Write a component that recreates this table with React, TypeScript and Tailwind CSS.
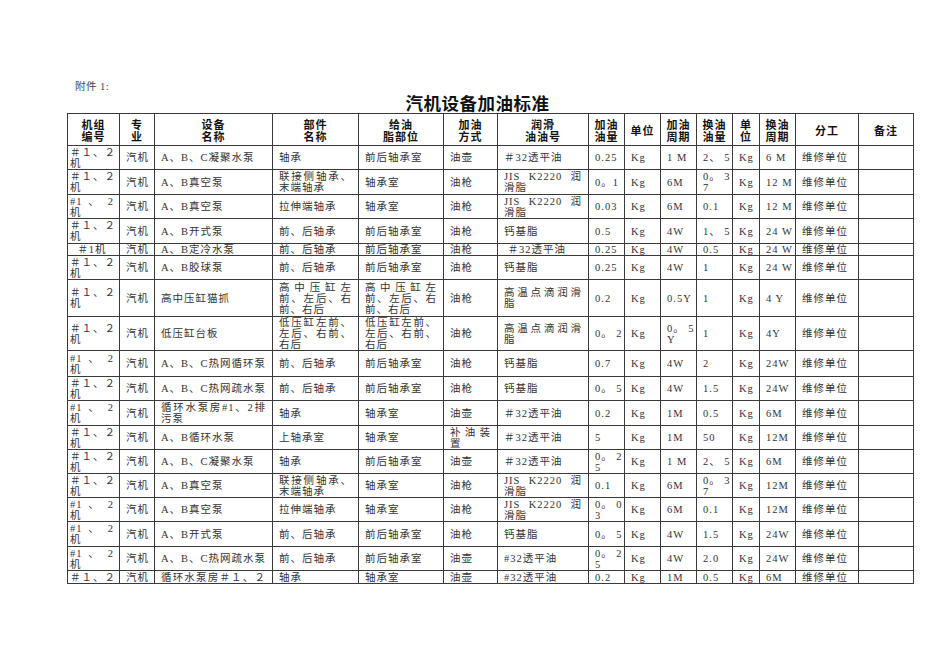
const font = "font-['Liberation_Serif','Noto_Sans_CJK_SC',serif]";
const cols =
  "grid grid-cols-[52px_35px_118px_86px_85px_54px_91px_36px_36px_36px_36px_27px_36px_63px_55px]";
const J = "[text-align-last:justify]";

const headers = [
  "机组\n编号",
  "专\n业",
  "设备\n名称",
  "部件\n名称",
  "给油\n脂部位",
  "加油\n方式",
  "润滑\n油油号",
  "加油\n油量",
  "单位",
  "加油\n周期",
  "换油\n油量",
  "单\n位",
  "换油\n周期",
  "分工",
  "备注",
];

type C = string | [string, string];

// heights match the ruled lines of the sheet
const rows: { h: string; cells: C[] }[] = [
  { h: "h-[24px]", cells: ["＃１、２\n机", "汽机", "A、B、C凝聚水泵", "轴承", "前后轴承室", "油壶", "＃32透平油", "0.25", "Kg", "1 M", "2、 5", "Kg", "6 M", "维修单位", ""] },
  { h: "h-[25px]", cells: ["＃１、２\n机", "汽机", "A、B真空泵", "联接侧轴承、\n末端轴承", "轴承室", "油枪", "JIS  K2220  润\n滑脂", "0。1", "Kg", "6M", "0。 3\n7", "Kg", "12 M", "维修单位", ""] },
  { h: "h-[24px]", cells: ["#1 、 2\n机", "汽机", "A、B真空泵", "拉伸端轴承", "轴承室", "油枪", "JIS  K2220  润\n滑脂", "0.03", "Kg", "6M", "0.1", "Kg", "12 M", "维修单位", ""] },
  { h: "h-[25px]", cells: ["＃１、２\n机", "汽机", "A、B开式泵", "前、后轴承", "前后轴承室", "油枪", "钙基脂", "0.5", "Kg", "4W", "1、 5", "Kg", "24 W", "维修单位", ""] },
  { h: "h-[12px]", cells: [["＃1机", "text-center"], "汽机", "A、B定冷水泵", "前、后轴承", "前后轴承室", "油枪", " ＃32透平油", "0.25", "Kg", "4W", "0.5", "Kg", "24 W", "维修单位", ""] },
  { h: "h-[24px]", cells: ["＃１、２\n机", "汽机", "A、B胶球泵", "前、后轴承", "前后轴承室", "油枪", "钙基脂", "0.25", "Kg", "4W", "1", "Kg", "24 W", "维修单位", ""] },
  { h: "h-[37px]", cells: ["＃１、２\n机", "汽机", "高中压缸猫抓", "高中压缸左\n前、左后、右\n前、右后", "高中压缸左\n前、左后、右\n前、右后", "油枪", "高温点滴润滑\n脂", "0.2", "Kg", "0.5Y", "1", "Kg", "4 Y", "维修单位", ""] },
  { h: "h-[34px]", cells: ["＃１、２\n机", "汽机", "低压缸台板", "低压缸左前、\n左后、右前、\n右后", "低压缸左前、\n左后、右前、\n右后", "油枪", "高温点滴润滑\n脂", "0。 2", "Kg", "0。 5\nY", "1", "Kg", "4Y", "维修单位", ""] },
  { h: "h-[26px]", cells: ["#1 、 2\n机", "汽机", "A、B、C热网循环泵", "前、后轴承", "前后轴承室", "油枪", "钙基脂", "0.7", "Kg", "4W", "2", "Kg", "24W", "维修单位", ""] },
  { h: "h-[24px]", cells: ["＃１、２\n机", "汽机", "A、B、C热网疏水泵", "前、后轴承", "前后轴承室", "油枪", "钙基脂", "0。 5", "Kg", "4W", "1.5", "Kg", "24W", "维修单位", ""] },
  { h: "h-[25px]", cells: ["#1 、 2\n机", "汽机", "循环水泵房#1、2排\n污泵", "轴承", "轴承室", "油壶", "＃32透平油", "0.2", "Kg", "1M", "0.5", "Kg", "6M", "维修单位", ""] },
  { h: "h-[24px]", cells: ["＃１、２\n机", "汽机", "A、B循环水泵", "上轴承室", "轴承室", "补油装\n置", "＃32透平油", "5", "Kg", "1M", "50", "Kg", "12M", "维修单位", ""] },
  { h: "h-[24px]", cells: ["＃１、２\n机", "汽机", "A、B、C凝聚水泵", "轴承", "前后轴承室", "油壶", "＃32透平油", "0。 2\n5", "Kg", "1 M", "2、 5", "Kg", "6M", "维修单位", ""] },
  { h: "h-[24px]", cells: ["＃１、２\n机", "汽机", "A、B真空泵", "联接侧轴承、\n末端轴承", "轴承室", "油枪", "JIS  K2220  润\n滑脂", "0.1", "Kg", "6M", "0。 3\n7", "Kg", "12M", "维修单位", ""] },
  { h: "h-[24px]", cells: ["#1 、 2\n机", "汽机", "A、B真空泵", "拉伸端轴承", "轴承室", "油枪", "JIS  K2220  润\n滑脂", "0。 0\n3", "Kg", "6M", "0.1", "Kg", "12M", "维修单位", ""] },
  { h: "h-[25px]", cells: ["#1 、 2\n机", "汽机", "A、B开式泵", "前、后轴承", "前后轴承室", "油枪", "钙基脂", "0。 5", "Kg", "4W", "1.5", "Kg", "24W", "维修单位", ""] },
  { h: "h-[24px]", cells: ["#1 、 2\n机", "汽机", "A、B、C热网疏水泵", "前、后轴承", "前后轴承室", "油壶", "#32透平油", "0。 2\n5", "Kg", "4W", "2.0", "Kg", "24W", "维修单位", ""] },
  { h: "h-[13px]", cells: [["＃１、２", J], "汽机", ["循环水泵房＃１、２", J], "轴承", "轴承室", "油壶", "#32透平油", "0.2", "Kg", "1M", "0.5", "Kg", "6M", "维修单位", ""] },
];

function Cell({ value, h, first }: { value: C; h: string; first: boolean }) {
  const [text, extra] = typeof value === "string" ? [value, ""] : value;
  const lines = text.split("\n");
  return (
    <div
      className={`${h} ${first ? "pl-[2px] pr-[5px]" : "px-[6px]"} flex items-center overflow-hidden border-r border-b border-[#3a3a3a]`}
    >
      <div className={`w-full leading-[11px] whitespace-pre ${extra}`}>
        {lines.map((l, i) => (
          <div key={i} className={i < lines.length - 1 ? J : ""}>
            {l}
          </div>
        ))}
      </div>
    </div>
  );
}

export default function App() {
  return (
    <div className={`w-[950px] h-[672px] bg-white pt-[81px] pl-[67px] text-[#333] ${font}`}>
      <div className="pl-[8px] h-[12px] leading-[12px] text-[10.5px] tracking-[0.5px] text-[#444]">
        附件 1:
      </div>
      <div className="w-[847px] pr-[26px] h-[20px] leading-[20px] text-center text-[17.5px] font-bold tracking-[0.5px] text-[#111] font-['Noto_Sans_CJK_SC',sans-serif]">
        汽机设备加油标准
      </div>

      <div className={`${cols} w-[847px] border-l border-t border-[#3a3a3a] text-[10.5px] tracking-[1px]`}>
        {headers.map((t, i) => (
          <div
            key={i}
            className="h-[32px] flex items-center justify-center text-center border-r border-b border-[#3a3a3a] font-bold text-[11px] leading-[12px] whitespace-pre text-[#111] font-['Noto_Sans_CJK_SC',sans-serif]"
          >
            {t}
          </div>
        ))}
        {rows.map((r, ri) =>
          r.cells.map((c, ci) => <Cell key={`${ri}-${ci}`} value={c} h={r.h} first={ci === 0} />)
        )}
      </div>
    </div>
  );
}
